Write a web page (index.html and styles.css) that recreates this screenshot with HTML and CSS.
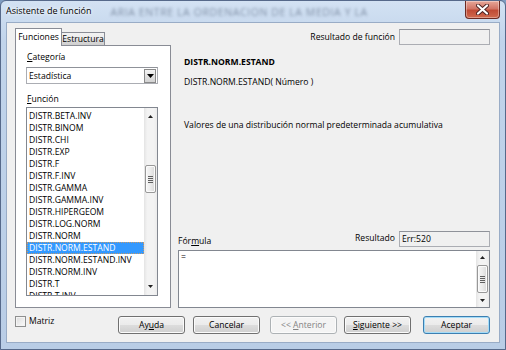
FILE: index.html
```html
<!DOCTYPE html>
<html lang="es">
<head>
    <meta charset="UTF-8">
    <title>Asistente de función</title>
    <link rel="stylesheet" href="styles.css">
</head>
<body>
    <div class="window">
        <div class="titlebar">
            <span class="title">Asistente de función</span>
            <span class="ghost">ARIA ENTRE LA ORDENACION DE LA MEDIA Y LA</span>
            <span class="close">
                <svg width="13" height="11" viewBox="0 0 13 11">
                    <path d="M2 1.5 L11 9.5 M11 1.5 L2 9.5" stroke="#4a2020" stroke-width="4" stroke-linecap="round"/>
                    <path d="M2 1.5 L11 9.5 M11 1.5 L2 9.5" stroke="#fff" stroke-width="2.2" stroke-linecap="round"/>
                </svg>
            </span>
        </div>

        <div class="client">
            <div class="main">
                <!-- pestañas -->
                <div class="left">
                    <div class="tabs">
                        <span class="tab active">Funciones</span>
                        <span class="tab">Estructura</span>
                    </div>
                    <div class="tabpanel">
                        <div class="label"><u>C</u>ategoría</div>
                        <div class="select">
                            <span class="select-text">Estadística</span>
                            <span class="drop">
                                <svg width="7" height="4" viewBox="0 0 7 4"><path d="M0 0 H7 L3.5 4 Z" fill="#000"/></svg>
                            </span>
                        </div>
                        <div class="label label-fn"><u>F</u>unción</div>
                        <div class="listbox">
                            <ul class="items">
                                <li>DISTR.BETA.INV</li>
                                <li>DISTR.BINOM</li>
                                <li>DISTR.CHI</li>
                                <li>DISTR.EXP</li>
                                <li>DISTR.F</li>
                                <li>DISTR.F.INV</li>
                                <li>DISTR.GAMMA</li>
                                <li>DISTR.GAMMA.INV</li>
                                <li>DISTR.HIPERGEOM</li>
                                <li>DISTR.LOG.NORM</li>
                                <li>DISTR.NORM</li>
                                <li class="selected">DISTR.NORM.ESTAND</li>
                                <li>DISTR.NORM.ESTAND.INV</li>
                                <li>DISTR.NORM.INV</li>
                                <li>DISTR.T</li>
                                <li>DISTR.T.INV</li>
                            </ul>
                            <div class="vscroll list-scroll">
                                <span class="arrow"><svg width="5" height="3" viewBox="0 0 5 3"><path d="M0 3 L2.5 0 L5 3 Z" fill="#222"/></svg></span>
                                <span class="thumb">
                                    <svg width="5" height="7" viewBox="0 0 5 7"><path d="M0 0.5 H5 M0 2.5 H5 M0 4.5 H5 M0 6.5 H5" stroke="#5f5f5f" stroke-width="1"/></svg>
                                </span>
                                <span class="track-fill"></span>
                                <span class="arrow"><svg width="5" height="3" viewBox="0 0 5 3"><path d="M0 0 L5 0 L2.5 3 Z" fill="#222"/></svg></span>
                            </div>
                        </div>
                    </div>
                </div>

                <!-- descripción y fórmula -->
                <div class="right">
                    <div class="result-row">
                        <span>Resultado de función</span>
                        <span class="field"></span>
                    </div>
                    <div class="info">
                        <div class="fn-name">DISTR.NORM.ESTAND</div>
                        <div class="fn-sig">DISTR.NORM.ESTAND( Número )</div>
                        <div class="fn-desc">Valores de una distribución normal predeterminada acumulativa</div>
                    </div>
                    <div class="formula-head">
                        <span class="formula-label">Fór<u>m</u>ula</span>
                        <span class="result-group">
                            <span class="result-label">Resultado</span>
                            <span class="field">Err:520</span>
                        </span>
                    </div>
                    <div class="formula">
                        <div class="formula-text">=</div>
                        <div class="vscroll formula-scroll">
                            <span class="arrow"><svg width="5" height="3" viewBox="0 0 5 3"><path d="M0 3 L2.5 0 L5 3 Z" fill="#222"/></svg></span>
                            <span class="thumb">
                                <svg width="5" height="7" viewBox="0 0 5 7"><path d="M0 0.5 H5 M0 2.5 H5 M0 4.5 H5 M0 6.5 H5" stroke="#5f5f5f" stroke-width="1"/></svg>
                            </span>
                            <span class="track-fill"></span>
                            <span class="arrow"><svg width="5" height="3" viewBox="0 0 5 3"><path d="M0 0 L5 0 L2.5 3 Z" fill="#222"/></svg></span>
                        </div>
                    </div>
                </div>
            </div>

            <div class="footer">
                <span class="checkbox"></span>
                <span class="check-label">Matriz</span>
                <div class="buttons">
                    <span class="btn">Ay<u>u</u>da</span>
                    <span class="btn btn-cancel">Cancelar</span>
                    <span class="btn btn-prev disabled">&lt;&lt; <u>A</u>nterior</span>
                    <span class="btn btn-next"><u>S</u>iguiente &gt;&gt;</span>
                    <span class="btn btn-ok default">Aceptar</span>
                </div>
            </div>
        </div>
    </div>
</body>
</html>
```

FILE: styles.css
```css
* {
    box-sizing: border-box;
}
html, body {
    margin: 0;
}
body {
    width: 506px;
    height: 350px;
    overflow: hidden;
    font-family: "Open Sans", "Noto Sans", sans-serif;
    font-size: 8.6px;
    color: #000;
    background: #7f9cc0;
}
u {
    text-decoration-thickness: 1px;
    text-underline-offset: 1px;
}

.window {
    width: 506px;
    height: 350px;
    border: 1px solid #56698a;
    border-radius: 6px 6px 0 0;
    background: linear-gradient(#d3e2f3, #c1d4eb 40px, #b9cde6);
    padding: 0 5px 6px;
    display: flex;
    flex-direction: column;
}
.titlebar {
    height: 21px;
    display: flex;
    align-items: flex-start;
    overflow: hidden;
}
.title {
    margin-top: 4px;
    line-height: 12px;
    font-size: 9px;
    text-shadow: 0 0 5px #fff, 0 0 3px #fff;
}
.ghost {
    margin-left: 19px;
    margin-top: 5px;
    line-height: 12px;
    font-size: 10.5px;
    letter-spacing: 0.6px;
    color: #6a7890;
    filter: blur(1.4px);
    opacity: 0.75;
    white-space: nowrap;
}
.close {
    margin-left: auto;
    width: 35px;
    height: 18px;
    border: 1px solid #6b2a22;
    border-top: none;
    border-radius: 0 0 4px 4px;
    background: linear-gradient(#e7a799, #d27566 45%, #c04b35 55%, #d06a4e);
    display: flex;
    align-items: center;
    justify-content: center;
    box-shadow: inset 0 0 0 1px rgba(255,255,255,0.35);
}

.client {
    width: 494px;
    height: 321px;
    border: 1px solid #99acc6;
    background: #f0f0f0;
    padding: 5px 9px 8px 8px;
    display: flex;
    flex-direction: column;
}
.main {
    height: 280px;
    display: grid;
    grid-template-columns: 156px 1fr;
    column-gap: 7px;
}

/* pestañas */
.left {
    display: flex;
    flex-direction: column;
}
.tabs {
    height: 17px;
    display: flex;
    align-items: flex-end;
}
.tab {
    height: 13px;
    width: 43px;
    border: 1px solid #898c95;
    border-bottom: none;
    border-left: none;
    background: linear-gradient(#f2f2f2, #ebebeb 50%, #dddddd 50%, #cfcfcf);
    line-height: 12px;
    text-align: center;
    white-space: nowrap;
}
.tab.active {
    width: 47px;
    height: 18px;
    margin-bottom: -1px;
    border-left: 1px solid #898c95;
    background: #fff;
    line-height: 16px;
    position: relative;
    z-index: 1;
}
.tabpanel {
    flex: 1;
    border: 1px solid #898c95;
    background: #fff;
    padding: 5px 0 0 10px;
}
.label {
    line-height: 12px;
    padding-left: 1px;
}
.label-fn {
    margin-top: 9px;
}
.select {
    margin-top: 4px;
    width: 132px;
    height: 17px;
    border: 1px solid #abadb3;
    border-top-color: #8f9299;
    background: #fff;
    display: flex;
    align-items: center;
    padding: 1px;
}
.select-text {
    flex: 1;
    padding-left: 1px;
}
.drop {
    width: 12px;
    height: 14px;
    border: 1px solid #8a8a8a;
    background: linear-gradient(#f4f4f4, #e2e2e2 50%, #d3d3d3);
    display: flex;
    align-items: center;
    justify-content: center;
}
.listbox {
    margin-top: 2px;
    width: 132px;
    height: 189px;
    border: 1px solid #828790;
    display: flex;
    overflow: hidden;
}
.items {
    flex: 1;
    list-style: none;
    margin: 0;
    padding: 2px 0 0;
    overflow: hidden;
}
.items li {
    height: 12px;
    line-height: 12px;
    padding-left: 2px;
    white-space: nowrap;
}
.items li.selected {
    background: #3399ff;
    color: #fff;
    outline: 1px dotted #c49a6c;
    outline-offset: -1px;
}

/* barras de desplazamiento */
.vscroll {
    width: 13px;
    display: flex;
    flex-direction: column;
    align-items: center;
    background: linear-gradient(to right, #e4e4e4, #f3f3f3 25%, #f3f3f3 75%, #ebebeb);
}
.arrow {
    width: 13px;
    display: flex;
    align-items: center;
    justify-content: center;
}
.thumb {
    width: 11px;
    height: 28px;
    border: 1px solid #989898;
    border-radius: 2px;
    background: linear-gradient(to right, #f7f7f7, #ebebeb 50%, #d9d9d9);
    box-shadow: inset 0 0 0 1px #fbfbfb;
    display: flex;
    align-items: center;
    justify-content: center;
}
.track-fill {
    flex: 1;
}
.list-scroll .arrow {
    height: 17px;
}
.list-scroll .thumb {
    margin-top: 40px;
}
.formula-scroll .arrow {
    height: 13px;
}
.formula-scroll .thumb {
    margin-top: 1px;
}

/* panel derecho */
.right {
    display: flex;
    flex-direction: column;
}
.result-row {
    height: 18px;
    display: flex;
    align-items: center;
    justify-content: flex-end;
    gap: 4px;
}
.field {
    width: 91px;
    height: 16px;
    border: 1px solid #abadb3;
    border-top-color: #8f9299;
    background: #f0f0f0;
    line-height: 14px;
    padding-left: 2px;
}
.info {
    flex: 1;
    padding-left: 6px;
}
.fn-name {
    margin-top: 10px;
    line-height: 12px;
    font-weight: bold;
}
.fn-sig {
    margin-top: 8px;
    line-height: 12px;
}
.fn-desc {
    margin-top: 31px;
    line-height: 12px;
}
.formula-head {
    height: 20px;
    display: flex;
    justify-content: space-between;
    align-items: flex-start;
}
.formula-label {
    margin-top: 5px;
    line-height: 12px;
}
.result-group {
    margin-top: 1px;
    display: flex;
    gap: 4px;
}
.result-label {
    line-height: 12px;
    margin-top: 1px;
}
.formula {
    height: 58px;
    border: 1px solid #828790;
    background: #fff;
    display: flex;
}
.formula-text {
    flex: 1;
    line-height: 12px;
    padding-left: 2px;
}

/* pie */
.footer {
    margin-top: 8px;
    height: 18px;
    display: flex;
    align-items: flex-start;
}
.checkbox {
    width: 11px;
    height: 11px;
    border: 1px solid #8e8f8f;
    background: linear-gradient(135deg, #dcdcdc, #fbfbfb);
    box-shadow: inset 0 0 0 1px #f4f4f4;
}
.check-label {
    margin-left: 3px;
    line-height: 11px;
}
.buttons {
    margin-left: auto;
    display: flex;
}
.btn {
    width: 67px;
    height: 18px;
    border: 1px solid #707070;
    border-radius: 3px;
    background: linear-gradient(#f2f2f2, #ebebeb 50%, #dddddd 50%, #cfcfcf);
    box-shadow: inset 0 0 0 1px #fbfbfb;
    text-align: center;
    line-height: 16px;
}
.btn-cancel {
    margin-left: 8px;
}
.btn-prev {
    margin-left: 10px;
}
.btn-next {
    margin-left: 7px;
}
.btn-ok {
    margin-left: 12px;
}
.btn.disabled {
    border-color: #adb2b5;
    background: #f4f4f4;
    color: #838383;
}
.btn.default {
    border-color: #3c7fb1;
    box-shadow: inset 0 0 0 1px #a4dcf8;
}
```
